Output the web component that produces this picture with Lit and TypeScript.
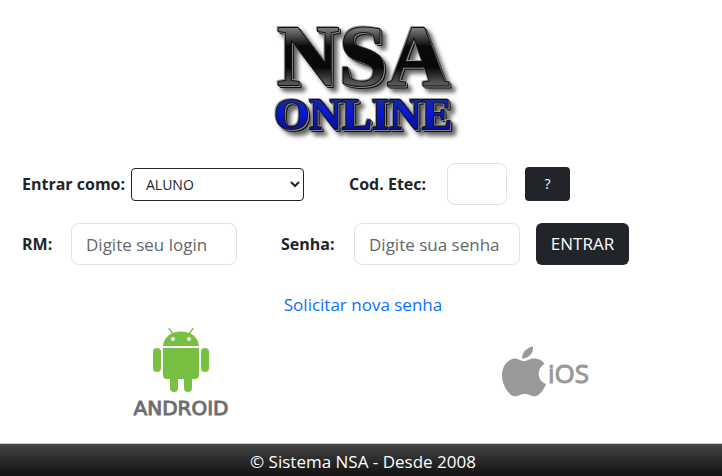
import { LitElement, html, css } from "lit";
import { customElement } from "lit/decorators.js";

// Embossed two-line site logo.
@customElement("nsa-logo")
class NsaLogo extends LitElement {
  static styles = css`
    :host { display: block; }
    svg { display: block; width: 200px; height: 120px; overflow: visible; }
    text {
      font-family: "Liberation Serif", serif;
      font-weight: bold;
      text-anchor: middle;
      stroke: #111;
      stroke-width: 2;
      stroke-linejoin: round;
      paint-order: stroke;
      filter: drop-shadow(-1px -1px 0 #999) drop-shadow(1px 1px 0 #888)
        drop-shadow(1px 1px 0 #111) drop-shadow(4px 4px 2px rgba(0, 0, 0, 0.6));
    }
    .top { font-size: 86px; fill: url(#steel); }
    .bottom { font-size: 45px; fill: url(#blue); }
  `;

  render() {
    return html`<svg viewBox="0 0 200 120">
      <defs>
        <linearGradient id="steel" x1="0" y1="0" x2="0" y2="1">
          <stop offset="0.22" stop-color="#777" />
          <stop offset="0.4" stop-color="#0a0a0a" />
          <stop offset="0.62" stop-color="#080808" />
          <stop offset="0.78" stop-color="#555" />
        </linearGradient>
        <linearGradient id="blue" x1="0" y1="0" x2="0" y2="1">
          <stop offset="0.2" stop-color="#1a2a90" />
          <stop offset="0.45" stop-color="#0818d8" />
          <stop offset="0.8" stop-color="#0a1490" />
        </linearGradient>
      </defs>
      <text class="top" x="102" y="65">NSA</text>
      <text class="bottom" x="102" y="109">ONLINE</text>
    </svg>`;
  }
}

@customElement("app-root")
class AppRoot extends LitElement {
  static styles = css`
    :host {
      display: flex;
      flex-direction: column;
      min-height: 100vh;
      background: #fff;
      color: #212529;
      font: 17px/24px "Segoe UI", "Open Sans", "Noto Sans", sans-serif;
    }
    *, *::before, *::after { box-sizing: border-box; }
    .head { display: flex; justify-content: center; padding-top: 20px; }
    form { padding: 23px 22px 0; }
    .row { display: flex; align-items: center; }
    .row + .row { margin-top: 18px; }
    label { font-weight: bold; font-size: 16px; white-space: nowrap; flex: none; }
    .kind { width: 109px; }
    .code { width: 98px; margin-left: 45px; }
    .user { width: 49px; }
    .pass { width: 73px; margin-left: 44px; }
    input, select, button { font: inherit; margin: 0; flex: none; }
    input {
      width: 166px;
      height: 42px;
      padding: 0 14px;
      border: 1px solid #dee2e6;
      border-radius: 8px;
      background: #fff;
      color: #212529;
    }
    input::placeholder { color: #62676c; opacity: 1; }
    .short { width: 60px; }
    select {
      width: 173px;
      height: 33px;
      padding: 0 0 0 10px;
      font-size: 14px;
      border: 1px solid #212529;
      border-radius: 4px;
      background: #fff;
      color: #212529;
    }
    button {
      height: 42px;
      width: 93px;
      padding: 0;
      margin-left: 16px;
      border: 0;
      border-radius: 6px;
      background: #212529;
      color: #fff;
    }
    .help { width: 45px; height: 34px; margin-left: 18px; border-radius: 4px; font-size: 14px; }
    .link { text-align: center; padding: 28px 0 0 4px; }
    a { color: #0d6efd; text-decoration: none; }
    .stores { display: grid; grid-template-columns: 1fr 1fr; justify-items: center; padding: 11px 0 23px; }
    .store { display: block; }
    .store svg { display: block; overflow: visible; }
    .mark {
      font: 20px "DejaVu Sans", sans-serif;
      fill: #6d6e71;
      stroke: #6d6e71;
      stroke-width: 1;
      text-anchor: middle;
    }
    .ios { font: 26px "Open Sans", sans-serif; fill: #999; stroke: #999; stroke-width: 1; }
    footer {
      margin-top: auto;
      padding: 6px 0 2px 4px;
      border-top: 1px solid #ccc;
      background: linear-gradient(#444, #111);
      color: #fff;
      text-align: center;
    }
  `;

  render() {
    return html`
      <header class="head"><nsa-logo></nsa-logo></header>
      <form @submit=${(e: Event) => e.preventDefault()}>
        <div class="row">
          <label class="kind" for="kind">Entrar como:</label>
          <select id="kind"><option>ALUNO</option></select>
          <label class="code" for="code">Cod. Etec:</label>
          <input class="short" id="code" type="text" />
          <button class="help" type="button">?</button>
        </div>
        <div class="row">
          <label class="user" for="user">RM:</label>
          <input id="user" type="text" placeholder="Digite seu login" />
          <label class="pass" for="pass">Senha:</label>
          <input id="pass" type="password" placeholder="Digite sua senha" />
          <button type="submit">ENTRAR</button>
        </div>
      </form>
      <div class="link"><a href="#">Solicitar nova senha</a></div>
      <div class="stores">
        <a class="store" href="#">
          <svg width="104" height="92" viewBox="0 0 104 92">
            <g fill="#77c043">
              <path d="M34 18C34.500 9.500 42 3.500 52 3.500S69.500 9.500 70 18z" />
              <rect x="24" y="20" width="8" height="24" rx="4" />
              <rect x="72" y="20" width="8" height="24" rx="4" />
              <path d="M34 20h36v27a4 4 0 0 1-4 4H38a4 4 0 0 1-4-4z" />
              <rect x="41" y="44" width="8" height="20" rx="4" />
              <rect x="55" y="44" width="8" height="20" rx="4" />
            </g>
            <path d="M44 6 40 .500M60 6l4-5.500" stroke="#77c043" stroke-width="1.300" stroke-linecap="round" />
            <circle cx="44" cy="11" r="1.900" fill="#fff" />
            <circle cx="60" cy="11" r="1.900" fill="#fff" />
            <text class="mark" x="52" y="87">ANDROID</text>
          </svg>
        </a>
        <a class="store" href="#">
          <svg width="92" height="92" viewBox="0 0 92 92">
            <g fill="#999">
              <path d="M37 18.500c.8 6-4 12-10.800 12.200C25.500 25 30.500 19.300 37 18.500z" />
              <path d="M27.500 33.300c3 0 6-3.300 11.500-2.800 4.300.3 7.500 2.200 9.600 5.300-8.800 5.500-7.300 17 1.400 20.400-2 5-6.600 12.100-11.200 12.100-4.200 0-5.500-2.300-10-2.300s-6 2.300-9.800 2.300C13 68.300 6 56.800 6 47.800 6 37 12.500 30.800 19 30.500c3.500 0 6.300 2.800 8.500 2.800z" />
            </g>
            <text class="ios" x="52" y="55">iOS</text>
          </svg>
        </a>
      </div>
      <footer>© Sistema NSA - Desde 2008</footer>
    `;
  }
}
